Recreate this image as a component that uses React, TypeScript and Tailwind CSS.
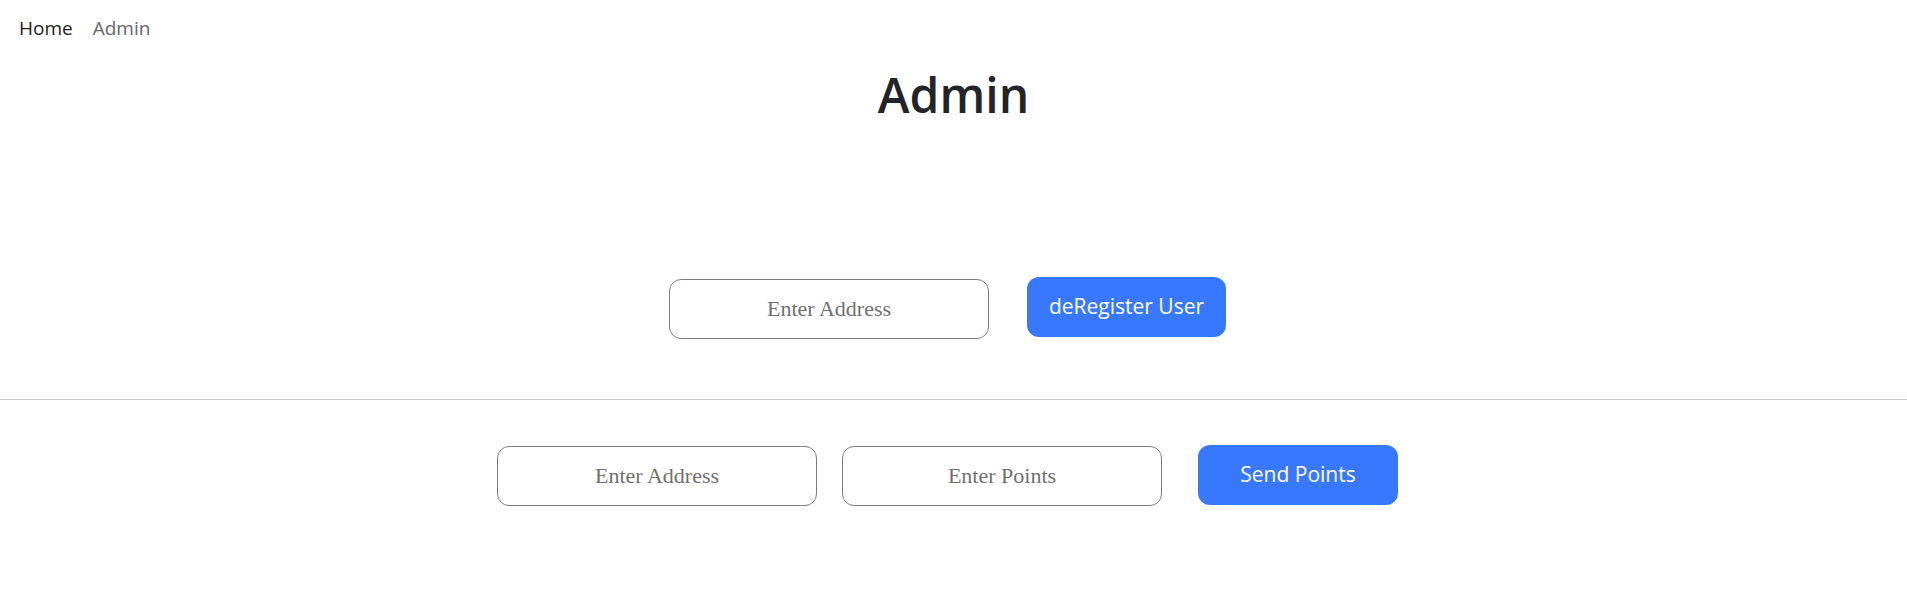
import React from "react";

export default function App() {
  const inputCls =
    "w-[320px] h-[60px] rounded-[12px] border border-[#7d7d7d] bg-white text-center text-[22px] text-black placeholder:text-[#707070] outline-none";
  const serif = { fontFamily: '"Liberation Serif", "Times New Roman", serif' };
  return (
    <div
      className="min-h-[602px] bg-white"
      style={{ fontFamily: '"Open Sans", "Noto Sans", sans-serif' }}
    >
      <nav className="flex gap-[20px] pl-[19px] pt-[16px] text-[19px] leading-6">
        <a className="text-[#1c1c1c]">Home</a>
        <a className="text-[#62666c]">Admin</a>
      </nav>
      <h1 className="mt-[26px] text-center text-[48px] font-semibold leading-[1.2] text-[#212529]">
        Admin
      </h1>
      <div className="mt-[153px] flex items-start justify-center gap-[38px] pr-3">
        <input className={inputCls + " mt-[2px]"} style={serif} placeholder="Enter Address" />
        <button className="w-[199px] h-[60px] rounded-[12px] bg-[#3778fe] text-[21px] text-white">
          deRegister User
        </button>
      </div>
      <hr className="mt-[60px] border-0 border-t border-[#c8c9ca]" />
      <div className="mt-[45px] flex items-start justify-center pr-3">
        <input className={inputCls + " mt-[1px]"} style={serif} placeholder="Enter Address" />
        <input className={inputCls + " mt-[1px] ml-[25px]"} style={serif} placeholder="Enter Points" />
        <button className="ml-[36px] w-[200px] h-[60px] rounded-[12px] bg-[#3778fe] text-[21px] text-white">
          Send Points
        </button>
      </div>
    </div>
  );
}
